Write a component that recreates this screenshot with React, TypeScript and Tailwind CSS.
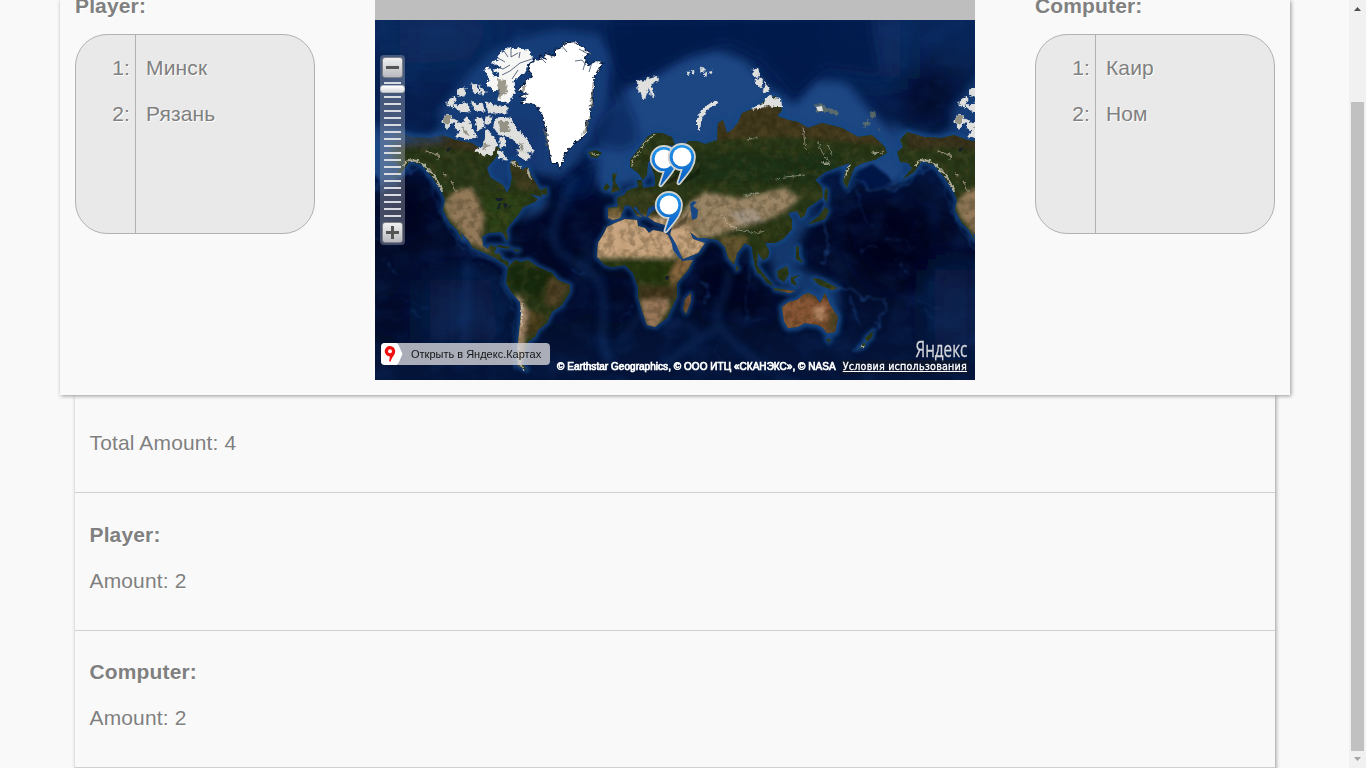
import React from "react";

const NORTH_AMERICA =
  "M395 132 388 140 391 147 385 152 388 162 396 163 400 168 390 180 402 172 410 161 422 165 432 177 442 192 445 200 443 210 450 223 457 230 463 241 461 233 457 228 468 240 473 248 485 253 495 258 503 263 508 267 509 262 502 259 500 254 494 253 497 247 490 245 488 249 483 246 482 237 488 233 500 232 503 233 507 241 508 238 506 230 510 224 518 215 523 207 535 202 538 199 530 194 542 197 540 190 532 177 527 167 522 170 516 161 512 160 510 167 512 177 510 187 507 193 503 185 490 177 487 168 498 155 500 148 490 144 482 150 472 143 455 140 442 135 430 138 412 137Z";
const SOUTH_AMERICA =
  "M508 267 515 260 521 262 528 260 538 267 552 273 558 280 570 285 570 292 562 305 552 312 547 323 538 330 535 337 528 342 525 353 522 363 527 370 518 366 517 353 519 333 521 313 520 302 512 293 506 283 507 275Z";
const GREENLAND =
  "M535 60 541 61 540 57 547 60 545 54 555 57 555 50 562 48 563 44 575 42 584 49 590 53 583 57 585 62 590 66 596 62 602 63 598 71 593 78 594 88 591 93 593 101 589 108 591 117 585 122 587 133 580 139 575 142 565 153 560 168 557 163 552 163 548 143 547 130 542 113 535 104 522 103 527 98 520 97 528 93 518 90 524 84 527 80 533 77 528 67Z";
const ELLESMERE =
  "M492 62 498 60 500 54 508 48 516 49 528 50 533 58 527 65 525 72 517 77 513 81 514 93 508 102 498 100 501 88 494 91 487 83 490 78 485 70 488 67 493 77 502 76 494 70 503 68Z";
const ARCTIC =
  "M471 84 477 86 480 93 474 92Z M480 87 486 92 483 95Z M458 89 465 88 464 96 459 96Z M447 102 453 97 456 100 452 107 447 105Z M456 106 464 103 470 108 469 112 460 111 455 107Z M472 102 477 106 482 103 484 111 475 110Z M486 102 493 105 507 107 507 113 490 113Z M445 115 451 116 454 121 447 129 443 122Z M454 120 461 124 467 118 473 130 476 137 466 139 456 137 461 130 455 128Z M476 118 482 118 484 127 478 130Z M486 117 492 117 489 124 485 124Z M495 119 510 118 515 128 525 137 533 150 532 153 524 149 530 157 527 160 517 155 521 148 512 138 498 133 494 127Z M486 130 491 134 497 144 492 154 482 155 475 150 483 147Z M500 139 504 137 505 146 500 147Z M498 151 503 153 507 160 500 158Z";
const EURASIA =
  "M630 167 630 160 640 147 647 137 654 133 662 133 672 137 675 145 666 146 682 150 688 141 697 141 705 144 717 140 718 123 723 120 727 133 732 130 738 123 742 113 758 107 767 99 776 96 782 110 777 116 788 120 798 122 808 128 822 123 842 128 858 137 872 135 885 147 887 153 875 160 863 163 855 167 852 173 847 188 843 182 845 172 850 163 838 167 825 172 815 180 822 187 823 197 815 203 807 208 805 215 801 218 797 211 788 213 792 220 792 229 783 239 775 243 765 243 769 251 768 257 763 260 758 253 757 265 765 277 757 273 753 257 752 247 745 243 737 253 734 265 728 258 725 247 718 240 705 238 698 238 690 232 693 239 705 243 698 253 683 259 678 250 670 235 672 227 655 222 648 217 652 212 664 207 671 212 670 204 661 199 654 205 648 208 646 217 641 214 636 206 633 208 642 217 637 216 631 206 625 205 620 218 613 220 608 218 608 208 618 207 617 198 624 195 628 190 638 187 637 180 642 180 643 188 655 186 655 177 651 166 659 157 654 155 648 163 647 175 643 180 638 173Z";
const AFRICA =
  "M663 232 653 230 649 233 645 228 638 226 637 220 625 219 615 223 607 227 603 235 598 243 597 257 605 265 612 267 625 265 633 273 638 287 638 297 642 311 647 325 655 327 667 318 672 307 677 297 677 283 688 270 693 260 682 261 675 250 668 235Z";
const AUSTRALIA =
  "M782 307 789 302 797 300 803 295 808 293 815 296 820 303 825 293 830 305 838 317 835 332 827 333 822 327 818 325 805 323 797 327 788 328 784 321Z";
const ISLANDS =
  "M612 174 617 173 615 181 620 190 611 193 613 184Z M607 183 610 187 606 191 603 188Z M588 152 596 150 602 153 597 158 591 157Z M825 188 828 190 827 203 824 198Z M825 207 829 210 825 219 814 223 808 224 819 216Z M691 293 691 301 686 314 683 309 685 299Z M736 265 739 269 736 271Z M752 263 762 272 774 286 767 283Z M777 271 787 266 789 274 784 282 778 278Z M791 277 800 275 794 279 797 286 791 283Z M774 288 795 291 790 293 774 290Z M796 247 799 246 799 256 803 263 796 259Z M812 278 820 279 838 288 832 290 819 285Z M826 339 831 339 829 343Z M873 331 872 337 867 342 865 338Z M864 342 866 345 859 349Z M497 245 510 247 508 249 498 247Z M513 249 520 250 517 252Z M540 190 547 188 547 195 541 194Z";
const SVALBARD =
  "M637 80 642 82 648 78 658 76 657 82 651 84 655 97 651 96 649 87 644 101 641 93 638 91Z M687 72 690 72 688 75Z M692 72 694 70 694 76Z M700 68 705 69 702 73Z M703 74 707 72 706 77Z M709 71 713 70 710 74Z M753 69 758 68 760 76 754 77Z M755 79 763 78 761 88 755 83Z M765 82 770 91 763 92Z";
const NOVAYA = "M697 129 697 119 701 110 708 104 718 100 717 104 709 108 704 114 701 122 700 131Z";
const TAYMYR = "M752 110 757 105 764 103 766 98 770 95 774 98 781 99 782 107 775 107 768 106Z";
const NEW_SIBERIAN = "M815 105 821 104 826 108 834 109 839 113 837 116 828 112 817 112Z M862 124 868 120 871 125 865 127Z M870 112 875 110 876 117 871 119Z M877 129 881 129 879 131Z";

function World() {
  return (
    <g id="world">
      <g filter="url(#soft6)">
        <g fill="#1a4683">
          <path d="M440 145 440 110 465 78 490 52 520 38 560 30 600 35 615 60 605 120 575 165 562 178 530 172 480 200Z" opacity=".8" />
          <path d="M605 125 620 90 655 75 680 60 715 50 745 60 765 85 795 105 815 80 845 82 870 110 890 130 905 150 908 172 850 172 780 150 690 160 630 185 600 190 590 170Z" />
          <path d="M540 195 550 200 540 212 515 222Z" />
          <path d="M765 245 790 215 820 205 800 240 800 268 835 285 840 300 835 340 810 300 775 280Z" opacity=".75" />
          <path d="M862 165 890 150 905 160 910 175 890 188Z" />
          <path d="M890 120 905 130 935 138 955 128 955 140 900 145Z" />
        </g>
        <path d="M542 115 540 170 510 155 505 120Z" fill="#113772" opacity=".7" />
      </g>
      <g filter="url(#soft3)" fill="none" stroke="#174684" strokeWidth="5" strokeLinejoin="round">
        <path d={NORTH_AMERICA} />
        <path d={SOUTH_AMERICA} />
        <path d={AFRICA} strokeWidth="4" />
        <path d={EURASIA} />
        <path d={AUSTRALIA} strokeWidth="7" />
        <path d={ISLANDS} strokeWidth="4" />
      </g>
      <g filter="url(#soft6)" fill="#06194a">
        <path d="M605 20 612 60 625 85 650 74 690 52 730 42 765 60 795 95 825 68 880 75 870 15Z" opacity=".85" />
        <path d="M596 128 608 110 628 104 636 122 638 142 622 150 600 146Z" opacity=".5" />
        <path d="M600 160 590 195 560 200 565 182Z" opacity=".9" />
        <path d="M612 60 620 85 628 100 620 108 611 90Z" opacity=".6" />
      </g>
      <path d="M858 172 872 164 888 176 892 182 880 188 862 186Z" fill="#051947" filter="url(#soft2)" />
      <g fill="none" stroke="#174283" filter="url(#soft4)" opacity=".5">
        <path d="M575 175C563 205 545 230 558 250 575 268 598 265 603 295S595 335 610 365" strokeWidth="9" opacity=".6" />
        <path d="M728 270C732 300 705 310 722 330S745 350 770 372M722 325 690 345 665 365" strokeWidth="8" opacity=".6" />
        <path d="M665 325 690 325 700 340M645 310 620 340M467 262 465 345" strokeWidth="7" opacity=".5" />
      </g>
      <g fill="none" stroke="#23559a" strokeWidth="1.4" filter="url(#ridge)" opacity=".5">
        <path d="M697 280 705 283 708 294 701 304" />
        <path d="M749 265 746 322 768 318" strokeWidth=".9" />
        <path d="M823 197 825 225 829 250 822 262" strokeWidth="2" />
        <path d="M838 288 855 292 865 299 886 298 884 313 873 333 855 352M848 297 861 325" strokeWidth="2" />
        <path d="M845 194 857 180 868 189 880 190 893 189 910 182 925 169" strokeWidth="2.2" />
        <path d="M859 190 864 220 875 225M883 238 900 240 912 249M895 260 910 275M912 298 940 310M922 311 933 318M862 250 880 247" strokeWidth="1" />
        <path d="M378 184 405 170 421 169 432 185 438 205 447 226 462 249 495 262 504 269 500 285 513 304 515 370" />
        <path d="M390 200 450 225 500 258M440 260 500 267" strokeWidth=".8" opacity=".35" />
        <path d="M570 270 585 273M617 328 635 305M713 352 728 365" strokeWidth="1" />
      </g>
      <g clipPath="url(#landClip)">
        <path d="M375 90H900V380H375Z" fill="#283818" />
        <g filter="url(#soft3)">
          <path d="M395 132H455L500 146 480 152 440 147 395 150Z" fill="#38331b" />
          <path d="M500 150H540V190H520L510 172Z" fill="#39371d" />
          <path d="M456 190 472 187 478 200 484 218 481 238 492 253 470 244 448 216 443 203Z" fill="#92795a" />
          <path d="M480 195H530V232H487Z" fill="#2c3f19" />
          <path d="M508 262 552 272 555 288 535 298 510 288Z" fill="#172a0d" />
          <path d="M549 277 571 285 558 307 544 306Z" fill="#4a3d20" />
          <path d="M531 310 546 315 540 332 522 338 524 310Z" fill="#473e1f" />
          <path d="M515 295 521 297 528 312 525 330 523 365 517 365Z" fill="#a98b70" />
          <path d="M645 133 675 133 722 118 760 98 790 115 890 130 890 146 780 136 720 140Z" fill="#41371b" />
          <path d="M675 153H840V183H675Z" fill="#1f3213" />
          <path d="M608 192H665V225H608Z" fill="#343c1e" />
          <path d="M606 209H622V220H606Z" fill="#7c663f" />
          <path d="M690 202 705 192 740 198 785 188 800 198 785 212 760 222 735 230 705 239 690 225 678 218Z" fill="#9a8566" />
          <path d="M730 210H756L765 221 741 226Z" fill="#a39584" />
          <path d="M660 217H697V228H670Z" fill="#85704f" />
          <path d="M668 228 690 227 707 245 698 260 682 260 668 240Z" fill="#c9a680" />
          <path d="M718 236 748 237 741 258 731 264Z" fill="#63552f" />
          <path d="M755 222 790 218 810 205 800 236 758 265Z" fill="#293819" />
          <path d="M595 218H665L677 258H595Z" fill="#c9a580" />
          <path d="M592 261 640 262 678 260 679 274 668 284 640 282 630 270Z" fill="#203610" />
          <path d="M680 256 694 259 689 270 672 288 670 274Z" fill="#87663f" />
          <path d="M638 286 678 286 676 299 640 301Z" fill="#3f361b" />
          <path d="M640 300 668 299 670 307 655 330 645 325Z" fill="#98775a" />
          <path d="M780 290H842V336H780Z" fill="#875436" />
          <path d="M802 292 832 293 838 300 808 298Z M831 308 842 315 835 334 826 330Z" fill="#4b4022" />
          <path d="M814 308 824 306 825 320 816 320Z" fill="#b98a68" />
          <path d="M683 293H694V317H683Z" fill="#6d4c30" />
        </g>
        <path d="M375 80H910V380H375Z" filter="url(#landNoise)" opacity=".24" />
        <path d="M375 80H910V380H375Z" filter="url(#landGlint)" opacity=".12" />
      </g>
      <g fill="#dfe0de" stroke="#dfe0de" strokeWidth="1.1">
        <path d={ARCTIC} filter="url(#rough)" />
        <path d={ELLESMERE} fill="#f6f6f5" stroke="#f6f6f5" filter="url(#rough)" />
        <path d={SVALBARD} strokeWidth=".5" filter="url(#rough)" />
        <path d={TAYMYR} strokeWidth="0" filter="url(#rough)" />
        <path d={NOVAYA} strokeWidth="0" filter="url(#rough)" />
        <path d={NEW_SIBERIAN} fill="#6f7766" strokeWidth="0" opacity=".75" filter="url(#rough)" />
        <path d="M816 107 822 106 823 111 818 111Z" strokeWidth="0" />
      </g>
      <path d={GREENLAND} stroke="#071838" strokeWidth="1.8" fill="#fff" paintOrder="stroke" filter="url(#rough)" />
      <g fill="#6d6957" opacity=".65" filter="url(#rough)">
        <path d="M497 79 506 80 507 92 499 99 498 90Z M444 115 451 116 450 123 444 124Z M499 121 508 121 510 132 500 132Z M518 142 525 145 522 151Z M588 118 591 115 586 133 582 135Z M593 80 593 108 590 106Z M521 87 527 85 523 92Z M543 128 547 132 549 155 546 142Z M462 126 470 136 464 134Z M484 142 490 146 482 151Z" />
      </g>
      <g stroke="#15294a" strokeWidth=".8" fill="none" opacity=".85">
        <path d="M494 66 503 69 510 65M504 51 508 57M511 49 511 57 518 53M502 75 510 71 520 63 532 59M512 79 518 70M520 52 519 58M498 58 505 62" />
        <path d="M575 61 582 60 586 65M579 49 588 54M548 50 552 58M540 57 546 63M562 46 567 52M586 60 583 70M592 62 589 72" />
      </g>
      <g fill="none" stroke="#d8d4c5" strokeLinecap="round" strokeLinejoin="round" opacity=".75" filter="url(#rough)">
        <path d="M404 165 408 160 418 161 426 167 435 177 442 190" strokeWidth="2" />
        <path d="M435 153 440 157 437 160M426 151 436 155M452 181 455 190M444 172 445 176" strokeWidth="1.4" stroke="#a89f88" />
        <path d="M632 166 633 160 640 150 647 140 655 135" strokeWidth="1.2" />
        <path d="M803 127 805 145 808 153M818 142 822 152 829 163M828 145 832 155M776 179 785 177 805 175" strokeWidth=".9" opacity=".75" />
        <path d="M822 162 829 164M850 165 846 175M873 153 882 153" strokeWidth="1.6" />
        <path d="M722 215 728 224 738 230 756 233 764 231" strokeWidth="1" opacity=".7" />
        <path d="M748 139 756 138M745 196 758 193" strokeWidth="1.4" opacity=".6" />
        <path d="M518 344 519 363 524 370M522 304 521 327" strokeWidth="1.3" />
        <path d="M511 162 520 167M517 150 528 153M528 170 530 178" strokeWidth="2" />
        <path d="M592 153 598 155M864 346 861 348" strokeWidth="1.2" />
      </g>
      <g fill="#141e2b">
        <path d="M495 198 504 198 501 201 497 201Z M499 203 501 203 499 209 497 209Z M503 203 508 204 505 209Z M505 209 513 205 509 208Z M446 149 452 147 448 152Z M666 276 669 276 668 280 665 279Z" />
      </g>
      <g fill="#174786">
        <path d="M690 204 693 201 697 202 693 206 698 210 697 218 692 220 691 211Z" />
        <path d="M670 234 676 244 682 258 680 259 673 250Z" />
      </g>
    </g>
  );
}

function MapPicture() {
  return (
    <svg className="block h-full w-full" viewBox="375 20 600 360" aria-hidden="true">
      <defs>
        <filter id="soft2" x="-20%" y="-20%" width="140%" height="140%"><feGaussianBlur stdDeviation="1.3" /></filter>
        <filter id="soft3" x="-10%" y="-10%" width="120%" height="120%"><feGaussianBlur stdDeviation="2.2" /></filter>
        <filter id="soft4" x="-10%" y="-10%" width="120%" height="120%"><feGaussianBlur stdDeviation="3.5" /></filter>
        <filter id="soft6" x="-10%" y="-10%" width="120%" height="120%"><feGaussianBlur stdDeviation="5" /></filter>
        <filter id="soft20" x="-30%" y="-30%" width="160%" height="160%"><feGaussianBlur stdDeviation="16" /></filter>
        <filter id="rough" x="-5%" y="-5%" width="110%" height="110%" colorInterpolationFilters="sRGB">
          <feTurbulence type="fractalNoise" baseFrequency=".3" numOctaves="2" seed="4" />
          <feDisplacementMap in="SourceGraphic" scale="5" xChannelSelector="R" yChannelSelector="G" />
        </filter>
        <filter id="ridge" x="-5%" y="-5%" width="110%" height="110%" colorInterpolationFilters="sRGB">
          <feTurbulence type="fractalNoise" baseFrequency=".09" numOctaves="3" seed="8" />
          <feDisplacementMap in="SourceGraphic" scale="12" xChannelSelector="R" yChannelSelector="G" />
          <feGaussianBlur stdDeviation=".8" />
        </filter>
        <filter id="landNoise" x="0" y="0" width="100%" height="100%" colorInterpolationFilters="sRGB">
          <feTurbulence type="fractalNoise" baseFrequency=".14" numOctaves="4" seed="9" />
          <feColorMatrix values="0 0 0 0 .12  0 0 0 0 .11  0 0 0 0 .03  4 0 0 0 -1.7" />
        </filter>
        <filter id="landGlint" x="0" y="0" width="100%" height="100%" colorInterpolationFilters="sRGB">
          <feTurbulence type="fractalNoise" baseFrequency=".1" numOctaves="4" seed="31" />
          <feColorMatrix values="0 0 0 0 .6  0 0 0 0 .48  0 0 0 0 .28  0 4 0 0 -1.9" />
        </filter>
        <filter id="seaNoise" x="0" y="0" width="100%" height="100%" colorInterpolationFilters="sRGB">
          <feTurbulence type="fractalNoise" baseFrequency=".035 .045" numOctaves="5" seed="13" />
          <feColorMatrix values="0 0 0 0 .07  0 0 0 0 .23  0 0 0 0 .47  3 0 0 0 -1.35" />
        </filter>
        <linearGradient id="sea" x1="0" y1="0" x2="0" y2="1">
          <stop offset="0" stopColor="#08265a" />
          <stop offset=".35" stopColor="#051a48" />
          <stop offset=".58" stopColor="#020a2b" />
          <stop offset="1" stopColor="#041439" />
        </linearGradient>
        <clipPath id="landClip">
          <path d={NORTH_AMERICA} />
          <path d={SOUTH_AMERICA} />
          <path d={EURASIA} />
          <path d={AFRICA} />
          <path d={AUSTRALIA} />
          <path d={ISLANDS} />
        </clipPath>
      </defs>
      <rect x="375" y="20" width="600" height="360" fill="url(#sea)" />
      <g filter="url(#soft20)">
        <path d="M375 180H440L420 235H375Z M900 75 960 75 935 125 910 115Z M525 225 555 205 550 240 575 300 560 340 545 280Z M580 185 600 200 590 250 575 245Z M845 205 925 200 940 290 880 290 840 250Z M605 270 635 290 620 330 600 310Z M700 255 770 280 765 335 740 310 690 310Z M380 290 410 310 400 340 375 330Z" fill="#01031b" opacity=".9" />
        <path d="M400 20H500L470 60 400 65Z M820 20H900L900 80 830 70Z M430 280 490 280 500 340 430 340Z M935 270H975V350H935Z" fill="#0b3068" opacity=".6" />
      </g>
      <rect x="375" y="20" width="600" height="360" filter="url(#seaNoise)" opacity=".22" />
      <World />
      <use href="#world" x="512" />
      <use href="#world" x="-512" />
    </svg>
  );
}

function Marker({ x, y }: { x: number; y: number }) {
  return (
    <svg className="absolute h-[46px] w-[36px] overflow-visible" style={{ left: x, top: y }} viewBox="0 0 36 46" aria-hidden="true">
      <defs>
        <linearGradient id="pin" x1="0" y1="0" x2="0" y2="1">
          <stop offset="0" stopColor="#2398ef" />
          <stop offset="1" stopColor="#0759bd" />
        </linearGradient>
      </defs>
      <path d="M14 40 30 26 34 20 31 32 21 38Z" fill="#000" opacity=".25" />
      <path d="M14 1A13 13 0 0 1 27 14C27 25 18 32.5 12.5 40 11 42 8.8 41.4 9.6 39L13.5 27A13 13 0 0 1 14 1Z" fill="url(#pin)" stroke="#d2d2cd" strokeWidth="1.8" />
      <circle cx="14" cy="14" r="9.4" fill="#fff" />
    </svg>
  );
}

const TICKS = Array.from({ length: 20 }, (_, i) => i);

function ZoomControl() {
  return (
    <div className="absolute left-[5px] top-[35px] flex h-[190px] w-[25px] flex-col items-center rounded-[4px] bg-[#a6acbb]/40 pt-[2px]">
      <div className="flex h-[21px] w-[21px] shrink-0 items-center justify-center rounded-[3px] border border-[#7d8087] bg-linear-to-b from-[#f0f0f1] to-[#b8babf]">
        <div className="h-[3px] w-[13px] bg-[#555]" />
      </div>
      <div className="mt-[4px] flex h-[140px] w-[17px] shrink-0 flex-col gap-[5px]">
        {TICKS.map((i) => <div key={i} className="h-[2px] bg-[#d8dbe1]" />)}
      </div>
      <div className="flex h-[21px] w-[21px] shrink-0 items-center justify-center rounded-[3px] border border-[#7d8087] bg-linear-to-b from-[#f0f0f1] to-[#b8babf]">
        <svg className="h-[13px] w-[13px]" viewBox="0 0 13 13"><path d="M6.5 0V13M0 6.5H13" stroke="#555" strokeWidth="3" /></svg>
      </div>
      <div className="absolute left-0 top-[30px] h-[8px] w-[25px] rounded-[3px] border border-[#b7bbc3] bg-linear-to-b from-white to-[#d7d9dd]" />
    </div>
  );
}

function CityMap() {
  return (
    <div className="relative h-[360px] w-[600px] overflow-hidden font-['Liberation_Sans',Arial,sans-serif] tracking-normal [text-shadow:none]">
      <MapPicture />
      <Marker x={275} y={125} />
      <Marker x={293} y={123} />
      <Marker x={280} y={171} />
      <ZoomControl />
      <div className="absolute left-[6px] top-[323px] flex h-[22px] w-[169px] items-center overflow-hidden rounded-[4px] bg-[#d4d5d8]/80">
        <svg className="h-[22px] w-[22px] shrink-0" viewBox="0 0 22 22" aria-hidden="true">
          <path d="M0 0H15Q17 0 18 3L21.5 11 18 19Q17 22 15 22H0Z" fill="#fff" />
          <path fillRule="evenodd" d="M9 3A5.2 5.2 0 0 1 14.2 8.2C14.2 12 11 13.5 9.7 18.5H8.2L8.8 13.4A5.2 5.2 0 0 1 9 3ZM9 6.2A2 2 0 1 0 9 10.2 2 2 0 0 0 9 6.2Z" fill="#f01010" />
        </svg>
        <span className="ml-[8px] whitespace-nowrap text-[11px] leading-[22px] text-[#151515]">Открыть в Яндекс.Картах</span>
      </div>
      <span className="absolute right-[8px] top-[315px] origin-right scale-x-[0.68] font-['Open_Sans',sans-serif] text-[22.5px] font-medium leading-[28px] text-[#d4d5da] [-webkit-text-stroke:0.3px_#d4d5da]">Яндекс</span>
      <div className="absolute right-[6px] top-[340px] flex h-[14px] items-center whitespace-nowrap text-[10px] leading-[14px] text-white">
        <span className="mr-[5px] tracking-[0.04px] [-webkit-text-stroke:0.7px_white]">© Earthstar Geographics, © ООО ИТЦ «СКАНЭКС», © NASA</span>
        <span className="bg-[#101827]/60 px-[2px] font-['DejaVu_Sans',sans-serif] text-[9.6px] tracking-[0.2px] underline [-webkit-text-stroke:0.3px_white]">Условия использования</span>
      </div>
    </div>
  );
}

function CityList({ title, cities }: { title: string; cities: string[] }) {
  return (
    <div className="w-[240px]">
      <div className="-mt-[9px] h-[43px] text-[21px] font-bold leading-[30px]">{title}</div>
      <div className="flex h-[200px] overflow-hidden rounded-[32px] border border-[#b1b1b1] bg-[#e9e9e9]">
        <div className="w-[60px] border-r border-[#b1b1b1] pr-[5px] pt-[10px] text-right">
          {cities.map((c, i) => <div key={c} className="h-[46px] leading-[46px]">{i + 1}:</div>)}
        </div>
        <div className="pl-[10px] pt-[10px]">
          {cities.map((c) => <div key={c} className="h-[46px] leading-[46px]">{c}</div>)}
        </div>
      </div>
    </div>
  );
}

export default function App() {
  return (
    <div className="flex h-[768px] w-[1366px] overflow-hidden bg-[#f9f9f9] font-['Liberation_Sans',Arial,sans-serif] text-[21px] tracking-[0.14px] text-[#808080] [text-shadow:1px_1px_0_#fff]">
      <main className="flex w-[1350px] shrink-0 flex-col items-center">
        <section className="z-10 flex h-[395px] w-[1230px] shrink-0 justify-between bg-[#f9f9f9] px-[15px] shadow-[1px_1px_4px_rgba(0,0,0,0.4)]">
          <CityList title="Player:" cities={["Минск", "Рязань"]} />
          <div>
            <div className="h-[20px] bg-[#bebebe]" />
            <CityMap />
          </div>
          <CityList title="Computer:" cities={["Каир", "Ном"]} />
        </section>
        <section className="h-[400px] w-[1200px] shrink-0 bg-[#f9f9f9] shadow-[1px_1px_4px_rgba(0,0,0,0.4)]">
          <div className="h-[98px] border-b border-[#d0d0d0] px-[14.5px] pt-[25px] leading-[46px]">Total Amount: 4</div>
          <div className="h-[138px] border-b border-[#d0d0d0] px-[14.5px] pt-[19px] leading-[46px]">
            <div className="font-bold">Player:</div>
            <div>Amount: 2</div>
          </div>
          <div className="h-[137px] border-b border-[#d0d0d0] px-[14.5px] pt-[18px] leading-[46px]">
            <div className="font-bold">Computer:</div>
            <div>Amount: 2</div>
          </div>
        </section>
      </main>
      <aside className="-ml-px flex w-[17px] shrink-0 flex-col items-center bg-[#f1f1f1]">
        <svg className="h-[102px] w-[17px]" viewBox="0 0 17 102"><path d="M5 11 8.5 7 12 11Z" fill="#505050" /></svg>
        <div className="h-[649px] w-[13px] bg-[#c1c1c1]" />
        <svg className="h-[17px] w-[17px]" viewBox="0 0 17 17"><path d="M5 6 8.5 10 12 6Z" fill="#a3a3a3" /></svg>
      </aside>
    </div>
  );
}
